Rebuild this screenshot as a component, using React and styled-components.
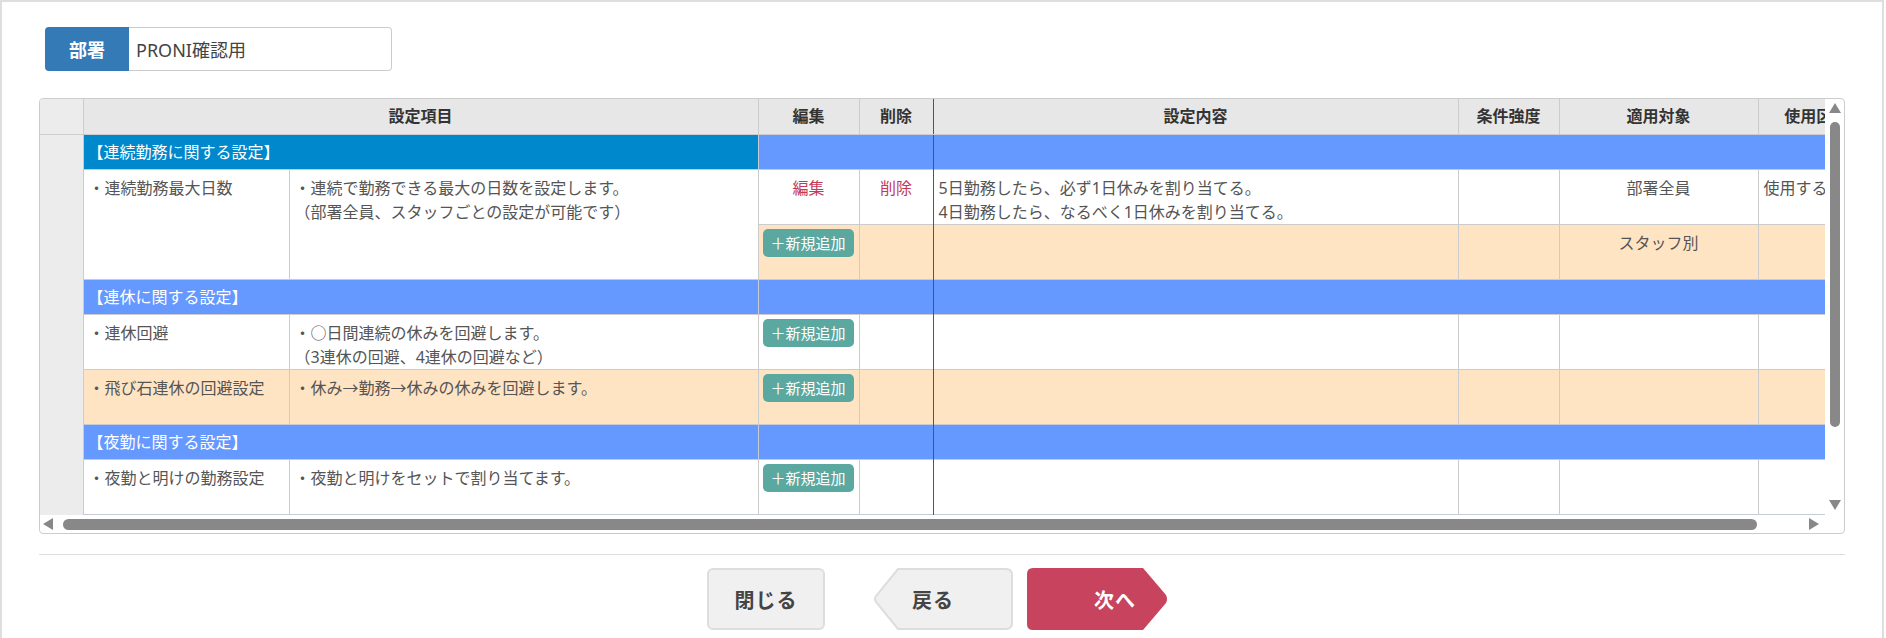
import React from 'react';
import styled, { createGlobalStyle } from 'styled-components';

const GlobalStyle = createGlobalStyle`
  html, body {
    margin: 0;
    padding: 0;
    background: #fff;
  }
  body {
    font-family: "Noto Sans", "Noto Sans CJK JP", sans-serif;
    color: #555;
  }
`;

const Panel = styled.div`
  box-sizing: border-box;
  width: 1884px;
  min-height: 638px;
  border: 2px solid #dedede;
  border-bottom: none;
  padding: 25px 37px 0;
`;

const DeptRow = styled.div`
  display: flex;
  height: 44px;
  margin-left: 6px;
`;

const DeptLabel = styled.div`
  width: 84px;
  display: flex;
  align-items: center;
  justify-content: center;
  background: #337ab7;
  color: #fff;
  font-weight: 700;
  font-size: 18px;
  border-radius: 4px 0 0 4px;
`;

const DeptInput = styled.div`
  box-sizing: border-box;
  width: 263px;
  display: flex;
  align-items: center;
  padding-left: 7px;
  border: 1px solid #ccc;
  border-left: none;
  border-radius: 0 4px 4px 0;
  font-size: 18px;
  color: #444;
`;

const GridFrame = styled.div`
  box-sizing: border-box;
  margin-top: 27px;
  height: 436px;
  border: 1px solid #ccc;
  border-radius: 4px;
  display: grid;
  grid-template-columns: 1fr 19px;
  grid-template-rows: 1fr 18px;
  overflow: hidden;
  background: #fff;
`;

const Viewport = styled.div`
  min-width: 0;
  overflow: hidden;
`;

const Sheet = styled.table`
  border-collapse: collapse;
  table-layout: fixed;
  width: 1834px;
  font-size: 16px;
  line-height: 24px;
  color: #555;
`;

const HeadRow = styled.tr`
  height: 35px;
`;

const Th = styled.th`
  padding: 0;
  background: #e7e7e7;
  color: #333;
  font-weight: 700;
  text-align: center;
  white-space: nowrap;
  overflow: hidden;
  border-left: 1px solid ${p => (p.$frozen ? '#555' : '#ccc')};
  border-bottom: 1px solid #ccc;
`;

const Corner = styled.th`
  padding: 0;
  background: #ececec;
  border-bottom: 1px solid #ccc;
`;

const RowHead = styled.td`
  padding: 0;
  background: #ececec;
`;

const GroupRow = styled.tr`
  height: 35px;
`;

const GroupCell = styled.td`
  padding: 0 4px;
  background: ${p => (p.$dark ? '#0088cc' : '#6699ff')};
  color: #fff;
  white-space: nowrap;
  vertical-align: middle;
  border-top: 1px solid #c6cbd6;
  border-left: 1px solid ${p => (p.$frozen ? '#555' : '#c6cbd6')};
`;

const ItemRow = styled.tr`
  height: 55px;
`;

const Td = styled.td`
  padding: ${p => (p.$tight ? '4px 4px 0' : '6px 5px 0')};
  vertical-align: top;
  white-space: nowrap;
  overflow: hidden;
  text-align: ${p => p.$align || 'left'};
  background: ${p => (p.$peach ? '#ffe4c4' : '#fff')};
  border-top: 1px solid #ccc;
  border-left: 1px solid ${p => (p.$frozen ? '#555' : '#ccc')};
`;

const LinkText = styled.span`
  color: #c5385a;
`;

const AddButton = styled.button`
  width: 91px;
  height: 28px;
  padding: 0;
  border: none;
  border-radius: 5px;
  background: #5ba8a0;
  color: #fff;
  font-family: inherit;
  font-size: 15px;
  line-height: 28px;
  cursor: pointer;
`;

const VScroll = styled.div`
  display: flex;
  flex-direction: column;
  align-items: center;
  padding: 4px 0 5px;
`;

const HScroll = styled.div`
  display: flex;
  align-items: center;
  padding: 0 6px 0 3px;
`;

const Arrow = styled.span`
  width: 0;
  height: 0;
  border-style: solid;
  border-color: transparent;
  ${p =>
    p.$dir === 'up' &&
    'border-width: 0 6px 10px 6px; border-bottom-color: #888;'}
  ${p =>
    p.$dir === 'down' &&
    'border-width: 10px 6px 0 6px; border-top-color: #888; margin-top: auto;'}
  ${p =>
    p.$dir === 'left' &&
    'border-width: 6px 10px 6px 0; border-right-color: #888;'}
  ${p =>
    p.$dir === 'right' &&
    'border-width: 6px 0 6px 10px; border-left-color: #888; margin-left: auto;'}
`;

const VThumb = styled.div`
  width: 10px;
  height: 305px;
  margin-top: 9px;
  margin-left: 1px;
  border-radius: 5px;
  background: #888;
`;

const HThumb = styled.div`
  width: 1694px;
  height: 11px;
  margin-left: 10px;
  margin-top: 1px;
  border-radius: 6px;
  background: #888;
`;

const Divider = styled.div`
  margin-top: 20px;
  border-top: 1px solid #ddd;
`;

const Footer = styled.div`
  display: flex;
  justify-content: center;
  align-items: center;
  margin-top: 13px;
  padding-right: 9px;
`;

const CloseButton = styled.button`
  box-sizing: border-box;
  width: 118px;
  height: 62px;
  margin-right: 48px;
  border: 2px solid #ddd;
  border-radius: 6px;
  background: #f0f0f0;
  color: #444;
  font-family: inherit;
  font-size: 20px;
  font-weight: 700;
  letter-spacing: 1px;
`;

const ArrowButton = styled.button`
  position: relative;
  width: ${p => p.$w}px;
  height: 62px;
  margin-right: ${p => p.$gap || 0}px;
  padding: 0 0 0 ${p => p.$pad}px;
  display: flex;
  align-items: center;
  border: none;
  background: none;
  color: ${p => (p.$primary ? '#fff' : '#444')};
  font-family: inherit;
  font-size: 20px;
  font-weight: 700;
  letter-spacing: 1px;

  svg {
    position: absolute;
    left: 0;
    top: 0;
  }
  span {
    position: relative;
  }
`;

const columns = [43, 206, 469, 101, 74, 525, 101, 199, 116];

const BackShape = () => (
  <svg width="140" height="62" viewBox="0 0 140 62">
    <path
      d="M25 1 H133 Q139 1 139 7 V55 Q139 61 133 61 H25 L3 34 Q1 31 3 28 Z"
      fill="#f0f0f0"
      stroke="#ddd"
      strokeWidth="2"
    />
  </svg>
);

const NextShape = () => (
  <svg width="141" height="62" viewBox="0 0 141 62">
    <path
      d="M6 0 H116 L139 27 Q141 31 139 35 L116 62 H6 Q0 62 0 56 V6 Q0 0 6 0 Z"
      fill="#c8435e"
    />
  </svg>
);

const Group = ({ title, dark }) => (
  <GroupRow>
    <GroupCell colSpan={2} $dark={dark}>{title}</GroupCell>
    <GroupCell colSpan={2} />
    <GroupCell colSpan={4} $frozen />
  </GroupRow>
);

const EmptyRight = ({ peach }) =>
  [0, 1, 2, 3].map(i => <Td key={i} $peach={peach} $frozen={i === 0} />);

export default function App() {
  return (
    <>
      <GlobalStyle />
      <Panel>
        <DeptRow>
          <DeptLabel>部署</DeptLabel>
          <DeptInput>PRONI確認用</DeptInput>
        </DeptRow>

        <GridFrame>
          <Viewport>
            <Sheet>
              <colgroup>
                {columns.map((w, i) => (
                  <col key={i} style={{ width: w }} />
                ))}
              </colgroup>
              <thead>
                <HeadRow>
                  <Corner />
                  <Th colSpan={2}>設定項目</Th>
                  <Th>編集</Th>
                  <Th>削除</Th>
                  <Th $frozen>設定内容</Th>
                  <Th>条件強度</Th>
                  <Th>適用対象</Th>
                  <Th>使用区分</Th>
                </HeadRow>
              </thead>
              <tbody>
                <GroupRow>
                  <RowHead rowSpan={9} />
                  <GroupCell colSpan={2} $dark>【連続勤務に関する設定】</GroupCell>
                  <GroupCell colSpan={2} />
                  <GroupCell colSpan={4} $frozen />
                </GroupRow>

                <ItemRow>
                  <Td rowSpan={2}>・連続勤務最大日数</Td>
                  <Td rowSpan={2}>
                    ・連続で勤務できる最大の日数を設定します。
                    <br />
                    （部署全員、スタッフごとの設定が可能です）
                  </Td>
                  <Td $align="center"><LinkText>編集</LinkText></Td>
                  <Td $align="center"><LinkText>削除</LinkText></Td>
                  <Td $frozen>
                    5日勤務したら、必ず1日休みを割り当てる。
                    <br />
                    4日勤務したら、なるべく1日休みを割り当てる。
                  </Td>
                  <Td />
                  <Td $align="center">部署全員</Td>
                  <Td>使用する</Td>
                </ItemRow>
                <ItemRow>
                  <Td $peach $tight><AddButton>＋新規追加</AddButton></Td>
                  <Td $peach />
                  <Td $peach $frozen />
                  <Td $peach />
                  <Td $peach $align="center">スタッフ別</Td>
                  <Td $peach />
                </ItemRow>

                <Group title="【連休に関する設定】" />
                <ItemRow>
                  <Td>・連休回避</Td>
                  <Td>
                    ・○日間連続の休みを回避します。
                    <br />
                    （3連休の回避、4連休の回避など）
                  </Td>
                  <Td $tight><AddButton>＋新規追加</AddButton></Td>
                  <Td />
                  <EmptyRight />
                </ItemRow>
                <ItemRow>
                  <Td $peach>・飛び石連休の回避設定</Td>
                  <Td $peach>・休み→勤務→休みの休みを回避します。</Td>
                  <Td $peach $tight><AddButton>＋新規追加</AddButton></Td>
                  <Td $peach />
                  <EmptyRight peach />
                </ItemRow>

                <Group title="【夜勤に関する設定】" />
                <ItemRow>
                  <Td>・夜勤と明けの勤務設定</Td>
                  <Td>・夜勤と明けをセットで割り当てます。</Td>
                  <Td $tight><AddButton>＋新規追加</AddButton></Td>
                  <Td />
                  <EmptyRight />
                </ItemRow>

                <Group title="" />
              </tbody>
            </Sheet>
          </Viewport>

          <VScroll>
            <Arrow $dir="up" />
            <VThumb />
            <Arrow $dir="down" />
          </VScroll>

          <HScroll>
            <Arrow $dir="left" />
            <HThumb />
            <Arrow $dir="right" />
          </HScroll>
          <div />
        </GridFrame>

        <Divider />

        <Footer>
          <CloseButton>閉じる</CloseButton>
          <ArrowButton $w={140} $pad={39} $gap={14}>
            <BackShape />
            <span>戻る</span>
          </ArrowButton>
          <ArrowButton $w={141} $pad={67} $primary>
            <NextShape />
            <span>次へ</span>
          </ArrowButton>
        </Footer>
      </Panel>
    </>
  );
}
